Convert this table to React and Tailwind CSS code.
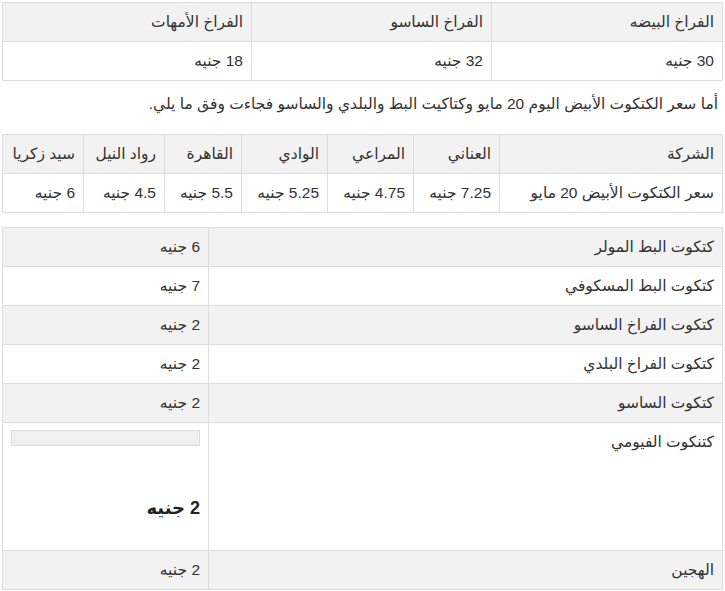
const chicks = [
  { name: "الفراخ البيضه", price: "30 جنيه" },
  { name: "الفراخ الساسو", price: "32 جنيه" },
  { name: "الفراخ الأمهات", price: "18 جنيه" },
];

const companies = [
  { name: "الشركة", price: "سعر الكتكوت الأبيض 20 مايو", w: "w-[223px]" },
  { name: "العناني", price: "7.25 جنيه", w: "w-[86px]" },
  { name: "المراعي", price: "4.75 جنيه", w: "w-[86px]" },
  { name: "الوادي", price: "5.25 جنيه", w: "w-[86px]" },
  { name: "القاهرة", price: "5.5 جنيه", w: "w-[77px]" },
  { name: "رواد النيل", price: "4.5 جنيه", w: "w-[81px]" },
  { name: "سيد زكريا", price: "6 جنيه", w: "w-[81px]" },
];

const types = [
  { name: "كتكوت البط المولر", price: "6 جنيه" },
  { name: "كتكوت البط المسكوفي", price: "7 جنيه" },
  { name: "كتكوت الفراخ الساسو", price: "2 جنيه" },
  { name: "كتكوت الفراخ البلدي", price: "2 جنيه" },
  { name: "كتكوت الساسو", price: "2 جنيه" },
];

const cell = "border border-[#dddddd] px-2 py-2 text-right align-middle whitespace-nowrap";

export default function App() {
  return (
    <div
      dir="rtl"
      className="w-[725px] min-h-[591px] bg-white px-[2px] pt-[2px] text-[15.5px] leading-[22px] text-[#333333]"
      style={{ fontFamily: '"Liberation Sans", "DejaVu Sans", sans-serif' }}
    >
      {/* FIRST TABLE */}
      <table className="w-[721px] table-fixed border-collapse">
        <tbody>
          <tr className="bg-[#f2f2f2]">
            <td className={`${cell} w-[231px]`}>{chicks[0].name}</td>
            <td className={`${cell} w-[240px]`}>{chicks[1].name}</td>
            <td className={cell}>{chicks[2].name}</td>
          </tr>
          <tr>
            {chicks.map((c) => (
              <td key={c.name} className={cell}>
                {c.price}
              </td>
            ))}
          </tr>
        </tbody>
      </table>

      <p className="mt-[11px] mb-[18px] pr-[5px] leading-[24px]">
        أما سعر الكتكوت الأبيض اليوم 20 مايو وكتاكيت البط والبلدي والساسو فجاءت وفق ما يلي.
      </p>

      {/* COMPANIES */}
      <table className="w-[720px] table-fixed border-collapse">
        <tbody>
          <tr className="bg-[#f2f2f2]">
            {companies.map((c) => (
              <td key={c.name} className={`${cell} ${c.w}`}>
                {c.name}
              </td>
            ))}
          </tr>
          <tr>
            {companies.map((c) => (
              <td key={c.name} className={cell}>
                {c.price}
              </td>
            ))}
          </tr>
        </tbody>
      </table>

      {/* TYPES */}
      <table className="mt-[14px] w-[721px] table-fixed border-collapse">
        <tbody>
          {types.map((t, i) => (
            <tr key={t.name} className={i % 2 === 0 ? "bg-[#f2f2f2]" : "bg-white"}>
              <td className={`${cell} w-[514px]`}>{t.name}</td>
              <td className={cell}>{t.price}</td>
            </tr>
          ))}
          <tr className="bg-white">
            <td className={`${cell} h-[128px] !align-top pt-[8px]`}>كتنكوت الفيومي</td>
            <td className="border border-[#dddddd] px-2 pt-[7px] pb-[24px] text-right align-top">
              <div className="h-[16px] border border-[#dddddd] bg-[#f0f0f0]" />
              <div className="mt-[50px] text-[18px] leading-[24px] font-bold text-[#222222]">2 جنيه</div>
            </td>
          </tr>
          <tr className="bg-[#f2f2f2]">
            <td className={cell}>الهجين</td>
            <td className={cell}>2 جنيه</td>
          </tr>
        </tbody>
      </table>
    </div>
  );
}
